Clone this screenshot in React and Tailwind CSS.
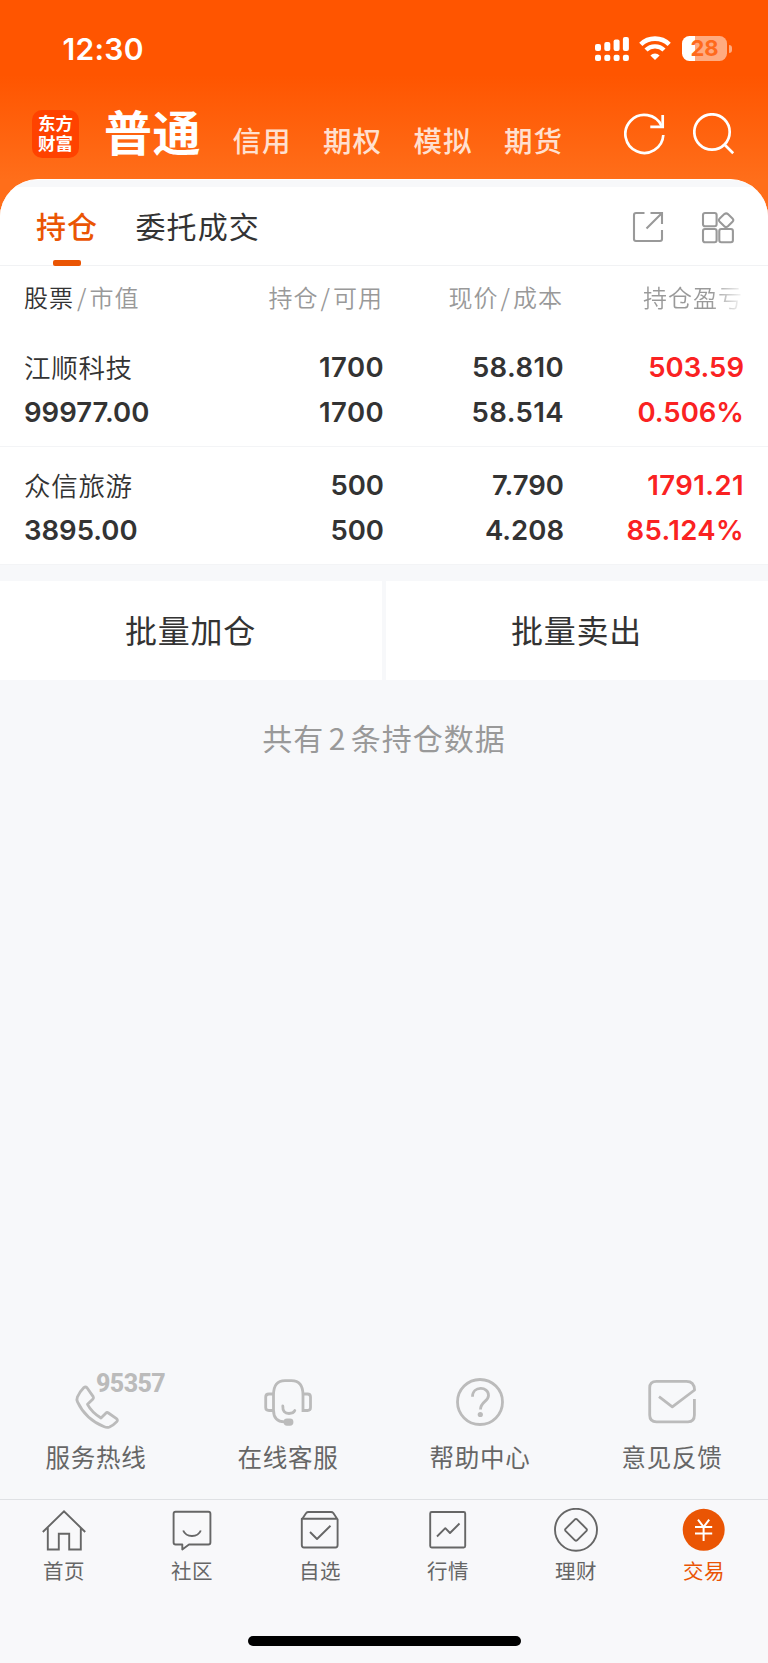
const CJK = "font-['Noto_Sans_CJK_SC','Noto_Sans_CJK_JP',sans-serif]";
const NUM = "font-['Inter','Noto_Sans_CJK_SC',sans-serif]";

function StatusBar() {
  return (
    <div className="flex h-[97px] items-center justify-between pl-[62.5px] pr-[36px]">
      <span className={`${NUM} text-[30px] font-semibold leading-none tracking-[0.3px] text-white`}>12:30</span>
      <div className="flex items-center">
        <svg width="34" height="25" viewBox="0 0 34 25" fill="#fff">
          <rect x="0" y="8" width="6" height="7" rx="2" />
          <rect x="9.3" y="6" width="6" height="9" rx="2" />
          <rect x="18.6" y="3.6" width="6" height="11.4" rx="2" />
          <rect x="27.9" y="1" width="6" height="14" rx="2" />
          <rect x="0" y="18.700" width="6" height="6.300" rx="2" />
          <rect x="9.3" y="18.700" width="6" height="6.300" rx="2" />
          <rect x="18.6" y="18.700" width="6" height="6.300" rx="2" />
          <rect x="27.9" y="18.700" width="6" height="6.300" rx="2" />
        </svg>
        <svg className="ml-[10.5px]" width="32" height="25" viewBox="0 0 32 25" fill="none" stroke="#fff">
          <path d="M1.8 8.4a20.4 20.4 0 0 1 28.4 0" strokeWidth="4.6" />
          <path d="M7 14a12.9 12.9 0 0 1 18 0" strokeWidth="4.4" />
          <path d="M16 24l-4.6-4.6a6.6 6.6 0 0 1 9.2 0z" fill="#fff" stroke="none" />
        </svg>
        <div className="ml-[11px] flex h-[25px] w-[45px] items-center justify-center rounded-[7.5px] bg-[linear-gradient(to_right,#fff_13px,#ffab80_13px)]">
          <span className={`${NUM} text-[22px] font-bold leading-[25px] text-[#ff6a1c]`}>28</span>
        </div>
        <div className="ml-[2px] h-[8px] w-[3px] rounded-r-full bg-[#ffab80]" />
      </div>
    </div>
  );
}

function Header() {
  return (
    <div className="flex h-[82px] items-start">
      <div className={`${CJK} ml-[32px] mt-[13px] flex h-[48px] w-[47px] shrink-0 flex-col items-center justify-center rounded-[10px] bg-[#ff4200] pb-[2px] text-[17.5px] font-bold leading-[20px] text-white`}>
        <span>东方</span>
        <span>财富</span>
      </div>
      <span className={`${CJK} ml-[25px] w-[104px] shrink-0 text-[48px] font-bold leading-[67px] tracking-[0.5px] text-white`}>普通</span>
      <div className={`${CJK} ml-[24.5px] flex shrink-0 gap-[31.5px] pt-[28px] text-[28.5px] font-medium leading-[30px] tracking-[1px] text-[#ffe0d0]`}>
        <span>信用</span>
        <span>期权</span>
        <span>模拟</span>
        <span>期货</span>
      </div>
      <svg className="ml-[61px] mt-[16px] shrink-0" width="42" height="42" viewBox="0 0 42 42" fill="none" stroke="#fff" strokeWidth="2.7">
        <path d="M39.300 22A19 19 0 1 1 37.500 12.800" />
        <path d="M38.700 2v11.800H26.300" />
      </svg>
      <svg className="ml-[27px] mt-[16px] shrink-0" width="42" height="42" viewBox="0 0 42 42" fill="none" stroke="#fff" strokeWidth="2.7">
        <circle cx="19" cy="19" r="17.700" />
        <path d="M31.2 31.2l9 9" />
      </svg>
    </div>
  );
}

function PanelTabs() {
  return (
    <div className="flex h-[79px] items-start border-b-[1.5px] border-[#f1f2f4] bg-white pl-[36px]">
      <div className={`${CJK} flex h-[79px] w-[62px] flex-col items-center text-[30px] font-medium leading-[76px] text-[#ea5504]`}>
        <span className="h-[73px] tracking-[1px]">持仓</span>
        <div className="h-[5.5px] w-[28px] rounded-[2px] bg-[#ea5504]" />
      </div>
      <span className={`${CJK} ml-[37.5px] text-[30px] leading-[76px] tracking-[1.1px] text-[#333]`}>委托成交</span>
      <svg className="ml-auto mt-[23.5px]" width="32" height="32" viewBox="0 0 32 32" fill="none" stroke="#999" strokeWidth="2.1">
        <path d="M12.500 2H4Q2 2 2 4V28Q2 30 4 30H28Q30 30 30 28V19" />
        <path d="M18.500 2H30V13M30 2L14.500 17.500" />
      </svg>
      <svg className="ml-[37px] mr-[33px] mt-[23.5px]" width="34" height="33" viewBox="0 0 34 33" fill="none" stroke="#999" strokeWidth="2.100">
        <rect x="2" y="2" width="13.600" height="13.300" rx="2" />
        <rect x="2" y="18" width="13.600" height="13.300" rx="2" />
        <rect x="18.300" y="18" width="13.600" height="13.300" rx="2" />
        <path d="M23.300 3.100q2-1.400 3.600 0l4.600 4.300q1.700 1.700 0 3.300l-4.600 4.600q-1.600 1.400-3.600 0l-4.600-4.600q-1.700-1.600 0-3.300z" />
      </svg>
    </div>
  );
}

const GRID = "grid grid-cols-[203px_156px_180px_180px] pl-[24px]";

function TableHead() {
  return (
    <div className={`${CJK} ${GRID} h-[63px] text-[24px] font-[350] leading-[61px] tracking-[1px] text-[#999]`}>
      <span>
        <span className="text-[#333]">股票</span>
        <span className="pl-[3px] pr-[2px]">/</span>市值
      </span>
      <span className="text-right">持仓<span className="px-[2px]">/</span>可用</span>
      <span className="text-right">现价<span className="px-[2px]">/</span>成本</span>
      <span className="bg-[linear-gradient(to_right,#999_0,#999_148px,#fff_182px)] bg-clip-text text-right text-transparent">持仓盈亏</span>
    </div>
  );
}

function Figure({ children }) {
  return <span className={children.includes("1") ? "tracking-[0.4px]" : "tracking-normal"}>{children}</span>;
}

function Holding({ name, value, cells, gain }) {
  return (
    <div className={`${NUM} ${GRID} h-[118px] border-b-[1.5px] border-[#f3f4f6] pt-[15.5px] text-[27.5px] font-semibold leading-[45px] text-[#333]`}>
      <div className="flex flex-col">
        <span className={`${CJK} h-[45px] text-[26.5px] font-[350] leading-[43px] tracking-[0.7px]`}>{name}</span>
        <Figure>{value}</Figure>
      </div>
      {cells.map((pair, i) => (
        <div key={i} className="-mr-px flex flex-col text-right">
          <Figure>{pair[0]}</Figure>
          <Figure>{pair[1]}</Figure>
        </div>
      ))}
      <div className="-mr-px flex flex-col text-right text-[#fa2222]">
        <Figure>{gain[0]}</Figure>
        <Figure>{gain[1]}</Figure>
      </div>
    </div>
  );
}

function Service({ label, children }) {
  return (
    <div className="flex flex-1 flex-col items-center">
      <div className="flex h-[54px] items-center">{children}</div>
      <span className={`${CJK} mt-[10px] text-[24.5px] leading-[36px] tracking-[0.8px] text-[#666]`}>{label}</span>
    </div>
  );
}

function Services() {
  const p = { width: 48, height: 48, viewBox: "0 0 48 48", fill: "none", stroke: "#bbb", strokeWidth: 2.8 };
  return (
    <div className="flex h-[124px] items-start">
      <Service label="服务热线">
        <div className="relative">
          <svg {...p} strokeLinejoin="round" className="overflow-visible">
            <path transform="translate(4.500 8)" d="M7.400 1.600Q9 .2 10.500 1.800L16.700 10.600Q17.500 12 16.500 13L11 18.300Q15 26 24.500 32L29.300 27.200Q30.500 26 31.900 27L40 32.600Q41.700 34 40.300 35.600Q37.200 39 33 41Q30.500 42 27.800 40.800Q9 33 1 15.800Q-.1 13.500.9 11Q3.500 5.500 7.400 1.600z" />
          </svg>
          <span className="absolute left-[24px] top-[-7px] font-['Roboto',sans-serif] text-[25px] font-extrabold leading-[25px] tracking-[-0.6px] text-[#bbb]">95357</span>
        </div>
      </Service>
      <Service label="在线客服">
        <svg {...p}>
          <path d="M9.500 34V17Q9.500 2.600 21 2.600H27.500Q39 2.600 39 17V34M9.500 32Q9.500 43.700 20.500 43.900" />
          <path d="M9.500 16H5Q1.700 16 1.700 19V29.500Q1.700 32.500 5 32.500H9.500M39 16H43.500Q46.500 16 46.500 19V29.500Q46.500 32.500 43.500 32.500H39" />
          <path d="M18.800 28Q18.500 35.500 25 35.500Q29.500 35.500 30.800 32.500" strokeLinecap="round" />
          <rect x="21" y="41.800" width="7" height="4.500" rx="2" fill="#bbb" />
        </svg>
      </Service>
      <Service label="帮助中心">
        <svg {...p}>
          <circle cx="24" cy="24" r="22.500" />
          <path d="M16.500 18.700C16.500 7.800 32.500 7.800 32.500 17.500C32.500 23.500 24.500 23.500 24.500 31.500" />
          <circle cx="24.300" cy="36.500" r="2.600" fill="#bbb" stroke="none" />
        </svg>
      </Service>
      <Service label="意见反馈">
        <svg {...p} strokeLinejoin="round">
          <path d="M46.400 21V37Q46.400 43.800 40 43.800H8.500Q1.700 43.800 1.700 37V10Q1.700 3.400 8.500 3.400H38.500Q46.200 3.400 46.600 12L24.300 28.800L11 18.700" />
        </svg>
      </Service>
    </div>
  );
}

function NavItem({ label, active, children }) {
  return (
    <div className={`flex flex-1 flex-col items-center ${active ? "text-[#ea5504]" : "text-[#666]"}`}>
      <svg width="44" height="44" viewBox="0 0 44 44" fill="none" stroke="#666" strokeWidth="1.9" strokeLinejoin="round">
        {children}
      </svg>
      <span className={`${CJK} mt-[4px] text-[20.5px] leading-[28px] tracking-[0.6px]`}>{label}</span>
    </div>
  );
}

function NavBar() {
  return (
    <div className="flex h-[137px] items-start border-t-[1.5px] border-[#dfe1e4] bg-[#f8f8fa] pt-[8px]">
      <NavItem label="首页">
        <path d="M.8 24L22 3.300L43.200 24M5.800 19.500V41.500H16.800V25.800H27.200V41.500H38.800V19.500" strokeLinejoin="miter" />
      </NavItem>
      <NavItem label="社区">
        <path d="M5.600 3.800H38.400Q40.400 3.800 40.400 5.800V34.500Q40.400 36.500 38.400 36.500H19L12.300 41.500V36.500H5.600Q3.600 36.500 3.600 34.500V5.800Q3.600 3.800 5.600 3.800z" />
        <path d="M13.200 22.500Q15.500 28 22 28T30.800 22.500" />
      </NavItem>
      <NavItem label="自选">
        <path d="M3.800 11.500L8.200 5Q9 4 10.500 4H33Q34.500 4 35.300 5L39.600 11.500V37Q39.600 39.500 37.500 39.500H6Q3.800 39.500 3.800 37V10.800H39.600" />
        <path d="M12 24L19 31L32.500 17.800" />
      </NavItem>
      <NavItem label="行情">
        <rect x="4.200" y="4" width="35" height="35.500" rx="1.500" />
        <path d="M11 28.500L19.300 20.200L24 25L33.500 15.500" />
      </NavItem>
      <NavItem label="理财">
        <circle cx="22" cy="21.800" r="21" />
        <path d="M21 11.300q1-.8 2 0l9.500 9.500q.8 1 0 2l-9.500 9.500q-1 .8-2 0l-9.500-9.500q-.8-1 0-2z" />
      </NavItem>
      <NavItem label="交易" active>
        <circle cx="21.700" cy="21.800" r="21" fill="#ea5504" stroke="none" />
        <path d="M16 11.700L21.600 19L27.200 11.700M21.600 19V33M13 19H30.200M13 25.500H30.200" stroke="#fff" strokeWidth="2" />
      </NavItem>
    </div>
  );
}

export default function App() {
  return (
    <div className="flex h-[1663px] w-[768px] flex-col overflow-hidden bg-[#f7f8fa]">
      <div className="h-[230px] shrink-0 bg-[linear-gradient(to_bottom,#ff5500_0,#ff5500_75px,#ff6e1a_180px,#ff6e1a_100%)]">
        <StatusBar />
        <Header />
      </div>
      <div className="relative -mt-[51px] shrink-0 overflow-hidden rounded-t-[38px] border-t border-white bg-[#f7f8fa] pt-[7px]">
        <PanelTabs />
        <div className="bg-white">
          <TableHead />
          <Holding name="江顺科技" value="99977.00" cells={[["1700", "1700"], ["58.810", "58.514"]]} gain={["503.59", "0.506%"]} />
          <Holding name="众信旅游" value="3895.00" cells={[["500", "500"], ["7.790", "4.208"]]} gain={["1791.21", "85.124%"]} />
        </div>
      </div>
      <div className={`${CJK} mt-[16px] flex h-[98.5px] shrink-0 gap-[4px] text-center text-[32px] leading-[97px] tracking-[0.8px] text-[#333]`}>
        <span className="flex-1 bg-white pr-[1px]">批量加仓</span>
        <span className="flex-1 bg-white pr-[1px]">批量卖出</span>
      </div>
      <p className={`${CJK} mt-[34.5px] text-center text-[30px] leading-[46px] tracking-[1px] text-[#999]`}>
        共有<span className="px-[4.5px]">2</span>条持仓数据
      </p>
      <div className="mt-auto">
        <Services />
        <NavBar />
        <div className="flex h-[27px] justify-center bg-[#f8f8fa]">
          <div className="h-[10px] w-[273px] rounded-full bg-black" />
        </div>
      </div>
    </div>
  );
}
